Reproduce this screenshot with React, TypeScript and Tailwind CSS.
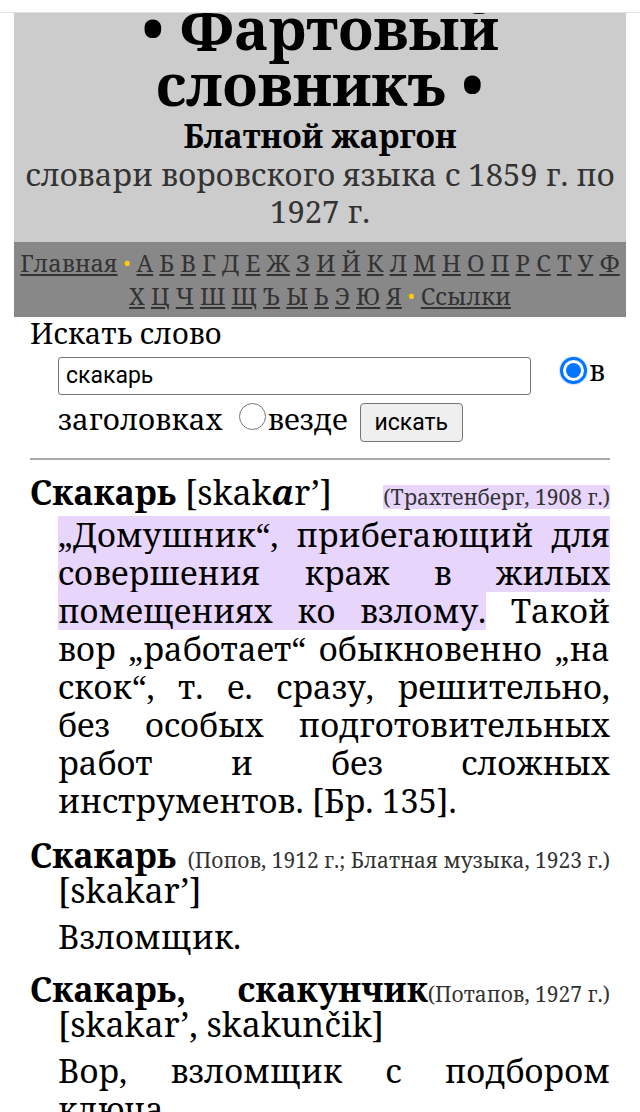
import React from 'react';

const serif = "font-['Noto_Serif','DejaVu_Serif',serif]";
const sans = "font-['Roboto','Liberation_Sans',sans-serif]";

const row1 = ['А', 'Б', 'В', 'Г', 'Д', 'Е', 'Ж', 'З', 'И', 'Й', 'К', 'Л', 'М', 'Н', 'О', 'П', 'Р', 'С', 'Т', 'У', 'Ф'];
const row2 = ['Х', 'Ц', 'Ч', 'Ш', 'Щ', 'Ъ', 'Ы', 'Ь', 'Э', 'Ю', 'Я'];

const mark =
  'box-decoration-clone bg-[linear-gradient(#e8d5fc,#e8d5fc)] bg-no-repeat bg-[length:100%_38px] bg-center';

const Dot = () => <span className="text-[#ffcc00] text-[18px] align-[2px]">•</span>;

const Letters = ({ items }: { items: string[] }) => (
  <>
    {items.map((l, i) => (
      <React.Fragment key={l}>
        <a href="#" className="underline">{l}</a>
        {i < items.length - 1 ? ' ' : ''}
      </React.Fragment>
    ))}
  </>
);

const Radio = ({ checked }: { checked?: boolean }) =>
  checked ? (
    <span className="inline-flex shrink-0 items-center justify-center w-[27px] h-[27px] rounded-full border-[3px] border-[#0075ff] bg-white shadow-[0_0_0_1px_#cfe2ff]">
      <span className="w-[15px] h-[15px] rounded-full bg-[#0075ff]" />
    </span>
  ) : (
    <span className="inline-block shrink-0 w-[27px] h-[27px] rounded-full border border-[#767676] bg-white" />
  );

const Source = ({ children, hl }: { children: React.ReactNode; hl?: boolean }) => (
  <span className={`float-right indent-0 text-[21px] leading-[24px] mt-[10px] text-[#333] ${hl ? 'bg-[#e8d5fc]' : ''}`}>
    {children}
  </span>
);

export default function App() {
  return (
    <div className={`${serif} bg-white text-black min-h-[1112px] overflow-hidden`}>
      <div className="h-[13px] border-b border-[#e2e2e2]" />

      <div className="mx-[14px] bg-[#cccccc] text-center overflow-hidden pb-[12px]">
        <div className="-mt-[13px] text-[58px] leading-[56px] font-bold">
          • Фартовый
          <br />
          словникъ •
        </div>
        <div className="mt-[5px] text-[32px] leading-[37px] font-bold">Блатной жаргон</div>
        <div className="mt-[2px] text-[31px] leading-[37px] text-[#333] px-2">
          словари воровского языка с 1859 г. по 1927 г.
        </div>
      </div>

      <div className="mx-[14px] bg-[#888888] text-center text-[23.7px] leading-[33px] text-[#333] pt-[5px] pb-[4px]">
        <a href="#" className="underline">Главная</a> <Dot /> <Letters items={row1} />
        <br />
        <Letters items={row2} /> <Dot /> <a href="#" className="underline">Ссылки</a>
      </div>

      <div className="px-[30px]">
        <div className="text-[29px] leading-[32px]">Искать слово</div>
        <div className="pl-7">
          <div className="flex items-start mt-[8px]">
            <div className={`w-[473px] h-[38px] border border-[#767676] rounded-[3px] px-[7px] flex items-center text-[23px] ${sans}`}>
              скакарь
            </div>
            <div className="ml-[29px] flex items-start text-[29px] leading-[26px]">
              <Radio checked />
              <span className="ml-[2px]">в</span>
            </div>
          </div>
          <div className="flex items-start text-[29.5px] leading-[32px] mt-[8px]">
            <span>заголовках</span>
            <span className="ml-[16px] flex"><Radio /></span>
            <span className="ml-[2px]">везде</span>
            <button className={`ml-[12px] w-[103px] h-[39px] bg-[#efefef] border border-[#767676] rounded-[4px] text-[23px] leading-[37px] ${sans}`}>
              искать
            </button>
          </div>
        </div>

        <hr className="mt-[16px] border-0 border-t-2 border-[#aaaaaa]" />

        <div className="mt-[15px]">
          <div className="pl-7 -indent-7 text-justify text-[34px] leading-[35px]">
            <Source hl>(Трахтенберг, 1908 г.)</Source>
            <b>Скакарь</b> [skak<b className="italic">a</b>r’]
          </div>
          <div className="pl-7 mt-[6px] text-justify text-[32.7px] leading-[38px]">
            <span className={mark}>„Домушник“, прибегающий для совершения краж в жилых помещениях ко взлому.</span>{' '}
            Такой вор „работает“ обыкновенно „на скок“, т. е. сразу, решительно, без особых подготовительных работ и без сложных инструментов. [Бр. 135].
          </div>
        </div>

        <div className="mt-[18px]">
          <div className="pl-7 -indent-7 text-justify text-[34px] leading-[35px]">
            <Source>(Попов, 1912 г.; Блатная музыка, 1923 г.)</Source>
            <b>Скакарь</b> [skakar’]
          </div>
          <div className="pl-7 mt-[10px] text-justify text-[32.7px] leading-[38px]">Взломщик.</div>
        </div>

        <div className="mt-[16px]">
          <div className="pl-7 -indent-7 text-justify text-[34px] leading-[35px]">
            <Source>(Потапов, 1927 г.)</Source>
            <b>Скакарь, скакунчик</b> [skakar’, skakunčik]
          </div>
          <div className="pl-7 mt-[10px] text-justify text-[32.7px] leading-[38px]">Вор, взломщик с подбором ключа.</div>
        </div>
      </div>
    </div>
  );
}
